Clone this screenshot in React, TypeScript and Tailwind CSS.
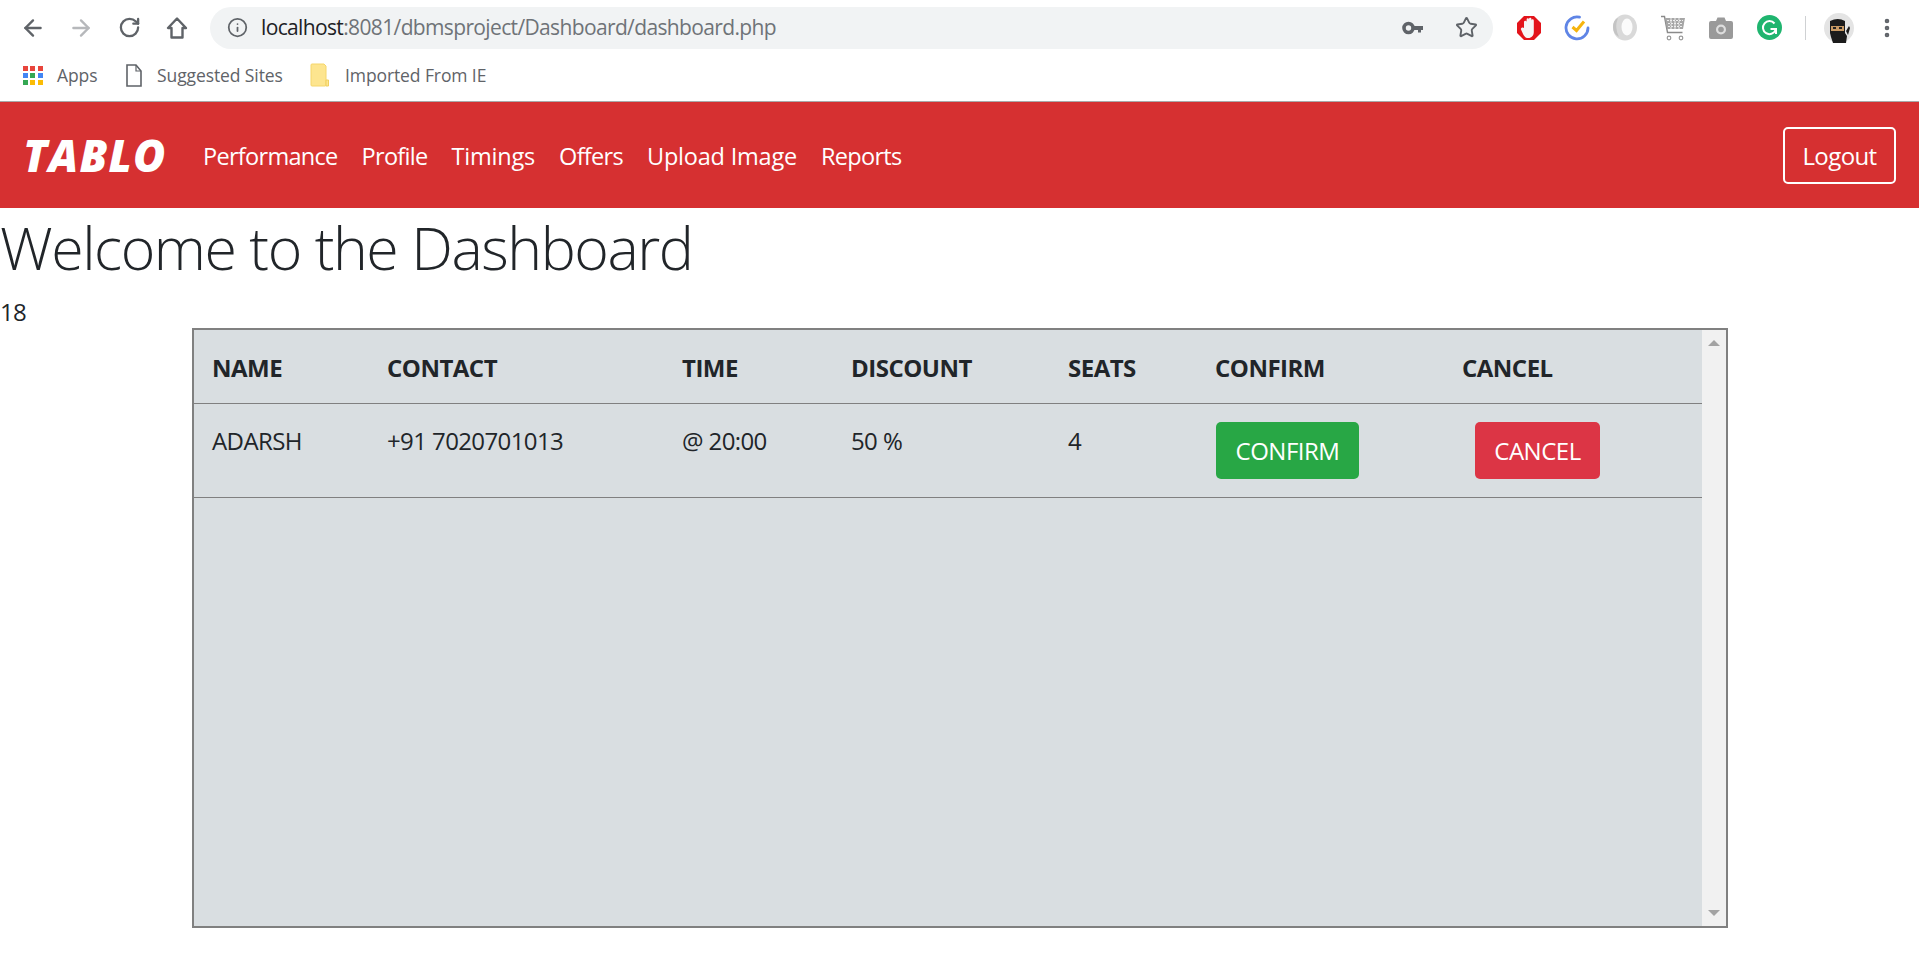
import { ArrowLeft, ArrowRight, RotateCw, Info, Star, MoreVertical } from "lucide-react";

const font = "font-['Open_Sans','Noto_Sans',sans-serif]";

function Slot({ children }: { children: React.ReactNode }) {
  return <div className="w-[48px] h-[28px] flex items-center justify-center shrink-0">{children}</div>;
}

function HomeIcon() {
  return (
    <svg width="22" height="24" viewBox="0 0 22 24" fill="none">
      <path d="M11 2.500L2 12h3.500v9.500h11V12H20z" stroke="#5f6368" strokeWidth="2.400" strokeLinejoin="round" />
    </svg>
  );
}

function KeyIcon() {
  return (
    <svg width="22" height="14" viewBox="0 0 22 14">
      <circle cx="6.500" cy="7" r="4.500" fill="none" stroke="#5f6368" strokeWidth="3.600" />
      <path d="M11 5h10v4h-2v2.500h-3V9h-5z" fill="#5f6368" />
    </svg>
  );
}

function AdBlock() {
  return (
    <svg width="26" height="26" viewBox="0 0 26 26">
      <path d="M8 1h10l7 7v10l-7 7H8l-7-7V8z" fill="#e3141b" />
      <path d="M8 13V7a1.300 1.300 0 0 1 2.600 0V4.500a1.200 1.200 0 0 1 2.400 0V4a1.200 1.200 0 0 1 2.400 0v1.500a1.200 1.200 0 0 1 2.400 0V17c0 3.500-2.200 6-5.400 6-2.700 0-4-1.500-5-3.300L5 14.500c-.8-1.500 1.800-3 3-1.500z" fill="#f6f6f6" />
    </svg>
  );
}

function Tick() {
  return (
    <svg width="26" height="26" viewBox="0 0 26 26" fill="none">
      <path d="M15.500 2.200A11 11 0 1 0 24 13" stroke="#5f85e6" strokeWidth="2.800" strokeLinecap="round" />
      <path d="M8.500 12l4 3.500 7.500-9" stroke="#f6b40e" strokeWidth="3" />
    </svg>
  );
}

function Ring() {
  return (
    <svg width="26" height="27" viewBox="0 0 26 27">
      <ellipse cx="13" cy="13.500" rx="12" ry="13" fill="#d9d9d9" />
      <path d="M6 4q-4 9 1 19q-6-3-6-10t5-9z" fill="#c4c4c4" />
      <ellipse cx="15" cy="13" rx="5.500" ry="8.500" fill="#fbfbfb" />
    </svg>
  );
}

function Cart() {
  return (
    <svg width="26" height="26" viewBox="0 0 26 26" fill="none">
      <path d="M1 1.500h3.500l3 16h15" stroke="#8a8a8a" strokeWidth="1.400" />
      <path d="M5 3h20l-2 11H7z" fill="#a6a6a6" />
      <path d="M7 5.500h16M8 8.500h14M8 11.500h14M11 3v11M15 3v11M19 3v11" stroke="#eeeeee" strokeWidth="1" strokeDasharray="2 1" />
      <circle cx="9" cy="23" r="1.800" fill="none" stroke="#999" strokeWidth="1.200" />
      <circle cx="21" cy="23" r="1.800" fill="none" stroke="#999" strokeWidth="1.200" />
    </svg>
  );
}

function Camera() {
  return (
    <svg width="24" height="22" viewBox="0 0 24 22">
      <path d="M2 4h5l1.500-3.500h7L17 4h5a2 2 0 0 1 2 2v14a2 2 0 0 1-2 2H2a2 2 0 0 1-2-2V6a2 2 0 0 1 2-2z" fill="#9a9a9a" />
      <circle cx="12" cy="12.500" r="5" fill="#dedede" />
      <circle cx="12" cy="12.500" r="2.800" fill="#9a9a9a" />
    </svg>
  );
}

function Grammarly() {
  return (
    <svg width="25" height="25" viewBox="0 0 25 25" fill="none">
      <circle cx="12.500" cy="12.500" r="12.500" fill="#1fb56f" />
      <path d="M17.500 8.500a6.500 6.500 0 1 0 1 6.500" stroke="#fff" strokeWidth="2" />
      <path d="M13.500 14h5.500v5" stroke="#fff" strokeWidth="2" />
    </svg>
  );
}

function Avatar() {
  return (
    <svg width="30" height="30" viewBox="0 0 30 30">
      <circle cx="15" cy="15" r="15" fill="#e4e4e4" />
      <path d="M6 8q8-4 15 0v12l2 3-1 7H9l-2-6-1-4z" fill="#1c1c1c" />
      <rect x="7" y="13" width="13" height="5" fill="#c99a64" />
      <rect x="9" y="14" width="3" height="2" fill="#222" />
      <rect x="15" y="14" width="3" height="2" fill="#222" />
      <path d="M22 18l3-5 1 2-2 7z" fill="#1c1c1c" />
    </svg>
  );
}

function Bookmark({ icon, label, w }: { icon: React.ReactNode; label: string; w: string }) {
  return (
    <div className={`flex items-center ${w}`}>
      {icon}
      <span className="text-[17.500px] tracking-[-0.1px] text-[#5f6368] whitespace-nowrap">{label}</span>
    </div>
  );
}

function AppsGrid() {
  const c = ["#e8453c", "#e8453c", "#e8453c", "#4285f4", "#34a853", "#4285f4", "#34a853", "#fbbc05", "#fbbc05"];
  return (
    <div className="grid grid-cols-3 gap-[2px] w-[20px] mr-[14px]">
      {c.map((x, i) => (
        <span key={i} className="w-[5px] h-[5px]" style={{ background: x }} />
      ))}
    </div>
  );
}

function DocIcon() {
  return (
    <svg className="mr-[15px] ml-[3px]" width="16" height="23" viewBox="0 0 16 23" fill="none">
      <path d="M1 1h9l5 6v15H1z" stroke="#5f6368" strokeWidth="1.600" />
      <path d="M10 1v6h5" stroke="#5f6368" strokeWidth="1.200" />
    </svg>
  );
}

function Folder() {
  return (
    <svg className="mr-[15px]" width="20" height="24" viewBox="0 0 20 24">
      <path d="M1 2a1 1 0 0 1 1-1h12l2 2v19a1 1 0 0 1-1 1H2a1 1 0 0 1-1-1z" fill="#fde58f" stroke="#f5d66b" />
      <path d="M16 23v-6h2.500v6z" fill="#fde58f" stroke="#f0cf5f" />
    </svg>
  );
}

const heads = [
  ["NAME", "w-[175px]"],
  ["CONTACT", "w-[295px]"],
  ["TIME", "w-[169px]"],
  ["DISCOUNT", "w-[217px]"],
  ["SEATS", "w-[147px]"],
  ["CONFIRM", "w-[247px]"],
  ["CANCEL", "w-[258px]"],
];

export default function App() {
  const td = "px-[18px] pt-[19px] align-top text-[24px] tracking-[-0.6px] text-[#212529] font-normal";
  return (
    <div className={`${font} bg-white h-[969px] overflow-hidden text-[#212529]`}>
      <div className="h-[101px] bg-white">
        <div className="h-[55px] flex items-center pl-[9px]">
          <Slot><ArrowLeft size={26} color="#5f6368" strokeWidth={2.200} /></Slot>
          <Slot><ArrowRight size={26} color="#b6b8bb" strokeWidth={2.200} /></Slot>
          <Slot><RotateCw size={23} color="#5f6368" strokeWidth={2.400} /></Slot>
          <Slot><HomeIcon /></Slot>
          <div className="ml-[9px] w-[1283px] h-[42px] rounded-full bg-[#f1f3f4] flex items-center pl-[17px] pr-[15px] shrink-0">
            <Info size={21} color="#5f6368" strokeWidth={2} />
            <span className="ml-[13px] text-[21px] tracking-[-0.64px] text-[#202124] whitespace-nowrap">
              localhost<span className="text-[#6f7378]">:8081/dbmsproject/Dashboard/dashboard.php</span>
            </span>
            <div className="ml-auto flex items-center gap-[31px]">
              <KeyIcon />
              <Star size={23} color="#5f6368" strokeWidth={2} />
            </div>
          </div>
          <div className="ml-[12px] flex items-center">
            <Slot><AdBlock /></Slot>
            <Slot><Tick /></Slot>
            <Slot><Ring /></Slot>
            <Slot><Cart /></Slot>
            <Slot><Camera /></Slot>
            <Slot><Grammarly /></Slot>
            <div className="w-px h-[24px] bg-[#cfd1d3] ml-[12px]" />
            <div className="ml-[18px]"><Avatar /></div>
            <div className="ml-[21px]"><MoreVertical size={24} color="#5f6368" strokeWidth={2.600} /></div>
          </div>
        </div>
        <div className="h-[30px] mt-[5px] flex items-center pl-[23px]">
          <Bookmark icon={<AppsGrid />} label="Apps" w="w-[100px]" />
          <Bookmark icon={<DocIcon />} label="Suggested Sites" w="w-[187px]" />
          <Bookmark icon={<Folder />} label="Imported From IE" w="w-[200px]" />
        </div>
      </div>
      <nav className="h-[107px] bg-[#d63031] border-t border-t-[#a9a9a9] flex items-center pl-[23px] pr-[23px] text-white">
        <span className="font-['Open_Sans',sans-serif] text-[44px] font-extrabold italic tracking-[1.200px] w-[180px] leading-none">TABLO</span>
        <div className="flex items-center gap-[24px] pt-[3px] text-[23.500px] tracking-[-0.7px]">
          <span>Performance</span>
          <span>Profile</span>
          <span className="tracking-[-0.2px]">Timings</span>
          <span>Offers</span>
          <span className="tracking-[-0.2px]">Upload Image</span>
          <span>Reports</span>
        </div>
        <button className="ml-auto w-[113px] h-[57px] pt-[1px] border-2 border-white rounded-[5px] text-[24px] tracking-[-0.6px]">Logout</button>
      </nav>
      <h1 className="text-[59px] font-light leading-[80px] tracking-[-1.440px] h-[80px] mt-[-1px] whitespace-nowrap">Welcome to the Dashboard</h1>
      <p className="text-[24px] leading-[30px] h-[30px] mt-[10px] tracking-[-0.6px]">18</p>
      <div className="ml-[192px] mt-[1px] w-[1536px] h-[600px] border-2 border-[#808080] flex">
        <div className="flex-1 bg-[#d9dee1]">
          <table className="w-full table-fixed border-collapse">
            <thead>
              <tr className="h-[73px] border-b border-b-[#808080]">
                {heads.map(([h, w]) => (
                  <th key={h} className={`${w} px-[18px] pt-[4px] text-left text-[24px] font-bold tracking-[-0.5px] text-[#212529]`}>{h}</th>
                ))}
              </tr>
            </thead>
            <tbody>
              <tr className="h-[94px] border-b border-b-[#808080]">
                <td className={td}>ADARSH</td>
                <td className={td}>+91 7020701013</td>
                <td className={td}>@ 20:00</td>
                <td className={td}>50 %</td>
                <td className={td}>4</td>
                <td className="px-[18px] align-middle">
                  <button className="ml-[1px] w-[143px] h-[57px] pt-[1px] bg-[#28a745] text-white rounded-[5px] text-[24px] tracking-[-0.5px]">CONFIRM</button>
                </td>
                <td className="px-[18px] align-middle">
                  <button className="ml-[13px] w-[125px] h-[57px] pt-[1px] bg-[#dc3545] text-white rounded-[5px] text-[24px] tracking-[-0.5px]">CANCEL</button>
                </td>
              </tr>
            </tbody>
          </table>
        </div>
        <div className="w-[25px] bg-[#f1f1f1] flex flex-col items-center justify-between py-[10px]">
          <span className="w-0 h-0 border-x-[6px] border-x-transparent border-b-[6px] border-b-[#a3a3a3]" />
          <span className="w-0 h-0 border-x-[6px] border-x-transparent border-t-[6px] border-t-[#a3a3a3]" />
        </div>
      </div>
    </div>
  );
}
